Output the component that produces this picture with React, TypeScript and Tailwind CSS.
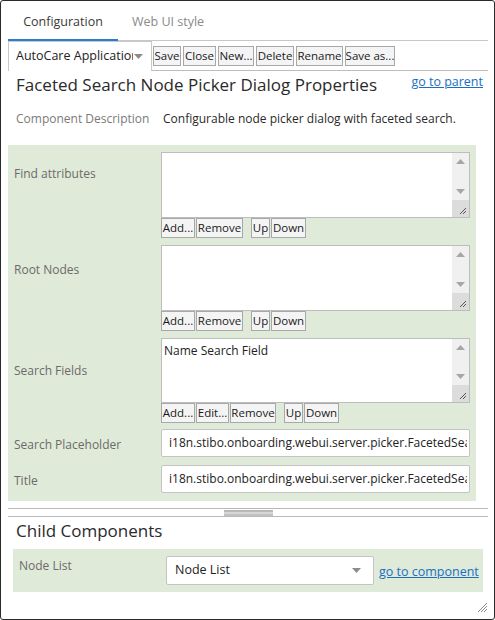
import React from "react";

function Btn({ w, children, className = "" }: { w: string; children: React.ReactNode; className?: string }) {
  return (
    <div
      className={`${w} h-[20px] border border-[#a8a8a8] bg-[#f4f4f4] text-[11.5px] leading-[18px] text-[#1a1a1a] flex items-center justify-center whitespace-nowrap overflow-hidden ${className}`}
    >
      {children}
    </div>
  );
}

function Arrow({ up }: { up?: boolean }) {
  return (
    <svg width="9" height="5" viewBox="0 0 9 5">
      {up ? <polygon points="0,5 9,5 4.5,0" fill="#a6a6a6" /> : <polygon points="0,0 9,0 4.5,5" fill="#a6a6a6" />}
    </svg>
  );
}

function TextArea({ h, text }: { h: string; text?: string }) {
  return (
    <div className={`w-[309px] ${h} border border-[#bdbdbd] bg-white flex`}>
      <div className="flex-1 px-[2px] pt-[3px] text-[12px] leading-[18px] text-[#222]">{text}</div>
      <div className="w-[17px] bg-[#f0f0f0] flex flex-col">
        <div className="h-[17px] flex items-center justify-center">
          <Arrow up />
        </div>
        <div className="flex-1" />
        <div className="h-[17px] flex items-center justify-center">
          <Arrow />
        </div>
        <div className="h-[17px] bg-[#dcdcdc] relative">
          <svg width="17" height="17" viewBox="0 0 17 17" className="absolute inset-0">
            <line x1="8" y1="14" x2="14" y2="8" stroke="#555" strokeWidth="1" />
            <line x1="11" y1="14" x2="14" y2="11" stroke="#555" strokeWidth="1" />
          </svg>
        </div>
      </div>
    </div>
  );
}

function Input({ value }: { value: string }) {
  return (
    <div className="w-[309px] h-[28px] border border-[#c4c4c4] bg-white rounded-[2px] pl-[7px] pr-[2px] flex items-center">
      <div className="overflow-hidden whitespace-nowrap text-[12px] text-[#222]">{value}</div>
    </div>
  );
}

export default function App() {
  const labelCls = "w-[153px] pl-[6px] text-[12px] leading-[18px] text-[#6b6b6b]";
  return (
    <div className="w-[495px] h-[620px] bg-white border border-[#2a2a2a] rounded-[3px] relative overflow-hidden font-['Open_Sans',_sans-serif]">
      <div className="ml-[7px] mr-[6px]">
        {/* Tabs */}
        <div className="h-[40px] flex border-b border-[#c8c8c8]">
          <div className="w-[110px] relative flex items-center justify-center text-[12.5px] text-[#3a3a3a] pt-[4px]">
            Configuration
            <div className="absolute left-0 right-0 bottom-[-1px] h-[2px] bg-[#2b7cd3]" />
          </div>
          <div className="w-[100px] flex items-center justify-center text-[12.5px] text-[#8a8a8a] pt-[4px]">Web UI style</div>
        </div>
        {/* Toolbar */}
        <div className="h-[30px] flex items-center border-b border-[#bdbdbd]">
          <div className="w-[144px] h-[30px] border border-[#c9c9c9] border-b-0 bg-white flex items-center pl-[7px] pr-[8px]">
            <div className="flex-1 overflow-hidden whitespace-nowrap text-[12.5px] text-[#222]">AutoCare Application</div>
            <svg width="9" height="5" viewBox="0 0 9 5" className="ml-[1px]">
              <polygon points="0,0 9,0 4.5,5" fill="#8c8c8c" />
            </svg>
          </div>
          <div className="flex gap-[2px] ml-[1px]">
            <Btn w="w-[28px]">Save</Btn>
            <Btn w="w-[33px]">Close</Btn>
            <Btn w="w-[36px]">New...</Btn>
            <Btn w="w-[38px]">Delete</Btn>
            <Btn w="w-[47px]">Rename</Btn>
            <Btn w="w-[50px]">Save as...</Btn>
          </div>
        </div>
        {/* Title */}
        <div className="flex items-start justify-between h-[30px]">
          <div className="pl-[8px] pt-[1px] text-[17px] leading-[25px] text-[#2a2a2a] whitespace-nowrap">Faceted Search Node Picker Dialog Properties</div>
          <a className="mr-[5px] mt-[2px] text-[12.5px] leading-[18px] text-[#1a6fc4] underline whitespace-nowrap">go to parent</a>
        </div>
        {/* Description */}
        <div className="flex mt-[9px] h-[18px] text-[12px] leading-[18px]">
          <div className="w-[155px] pl-[8px] text-[#7a7a7a] whitespace-nowrap">Component Description</div>
          <div className="text-[#2a2a2a] whitespace-nowrap">Configurable node picker dialog with faceted search.</div>
        </div>
        {/* Green panel */}
        <div className="mt-[17px] w-[468px] bg-[#e0ead8] pt-[7px] pb-[8px]">
          {/* Find attributes */}
          <div className="flex">
            <div className={`${labelCls} pt-[13px]`}>Find attributes</div>
            <div>
              <TextArea h="h-[66px]" />
              <div className="flex">
                <Btn w="w-[34px]">Add...</Btn>
                <Btn w="w-[47px]" className="ml-[1px]">Remove</Btn>
                <Btn w="w-[19px]" className="ml-[8px]">Up</Btn>
                <Btn w="w-[35px]" className="ml-[1px]">Down</Btn>
              </div>
            </div>
          </div>
          {/* Root Nodes */}
          <div className="flex mt-[7px]">
            <div className={`${labelCls} pt-[16px]`}>Root Nodes</div>
            <div>
              <TextArea h="h-[66px]" />
              <div className="flex">
                <Btn w="w-[34px]">Add...</Btn>
                <Btn w="w-[47px]" className="ml-[1px]">Remove</Btn>
                <Btn w="w-[19px]" className="ml-[8px]">Up</Btn>
                <Btn w="w-[35px]" className="ml-[1px]">Down</Btn>
              </div>
            </div>
          </div>
          {/* Search Fields */}
          <div className="flex mt-[7px]">
            <div className={`${labelCls} pt-[24px]`}>Search Fields</div>
            <div>
              <TextArea h="h-[65px]" text="Name Search Field" />
              <div className="flex">
                <Btn w="w-[34px]">Add...</Btn>
                <Btn w="w-[33px]" className="ml-[1px]">Edit...</Btn>
                <Btn w="w-[46px]" className="ml-[1px]">Remove</Btn>
                <Btn w="w-[19px]" className="ml-[8px]">Up</Btn>
                <Btn w="w-[35px]" className="ml-[1px]">Down</Btn>
              </div>
            </div>
          </div>
          {/* Search Placeholder */}
          <div className="flex items-center mt-[6px]">
            <div className={`${labelCls} pt-[3px]`}>Search Placeholder</div>
            <Input value="i18n.stibo.onboarding.webui.server.picker.FacetedSearchNodePickerDialog.SearchPlaceholder" />
          </div>
          {/* Title */}
          <div className="flex items-center mt-[8px]">
            <div className={`${labelCls} pt-[3px]`}>Title</div>
            <Input value="i18n.stibo.onboarding.webui.server.picker.FacetedSearchNodePickerDialog.Title" />
          </div>
        </div>
        {/* Divider */}
        <div className="mt-[7px] border-t border-b border-[#b8b8b8] h-[9px] flex justify-center items-center">
          <div className="w-[49px] h-[6px] flex flex-col">
            <div className="h-[2px] bg-[#b9b9b9]" />
            <div className="h-[2px] bg-[#d6d6d6]" />
            <div className="h-[2px] bg-[#c2c2c2]" />
          </div>
        </div>
        {/* Child Components */}
        <div className="pl-[8px] h-[25px] mt-[1px] text-[17px] leading-[25px] text-[#2a2a2a]">Child Components</div>
        <div className="mx-[5px] mt-[6px] h-[43px] bg-[#e0ead8] flex items-start">
          <div className="w-[153px] pl-[6px] pt-[8px] text-[12px] leading-[18px] text-[#6b6b6b]">Node List</div>
          <div className="mt-[7px] w-[208px] h-[29px] border border-[#c4c4c4] bg-white rounded-[2px] flex items-center pl-[8px] pr-[12px]">
            <div className="flex-1 text-[12.5px] text-[#222]">Node List</div>
            <svg width="9" height="5" viewBox="0 0 9 5">
              <polygon points="0,0 9,0 4.5,5" fill="#8c8c8c" />
            </svg>
          </div>
          <a className="ml-[5px] mt-[14px] text-[12.5px] leading-[18px] text-[#1a6fc4] underline whitespace-nowrap">go to component</a>
        </div>
      </div>
      {/* Resize grip */}
      <svg width="11" height="11" viewBox="0 0 11 11" className="absolute right-[6px] bottom-[6px]">
        <line x1="1" y1="10" x2="10" y2="1" stroke="#8a8a8a" strokeWidth="1" />
        <line x1="4" y1="10" x2="10" y2="4" stroke="#8a8a8a" strokeWidth="1" />
        <line x1="7" y1="10" x2="10" y2="7" stroke="#8a8a8a" strokeWidth="1" />
      </svg>
    </div>
  );
}
